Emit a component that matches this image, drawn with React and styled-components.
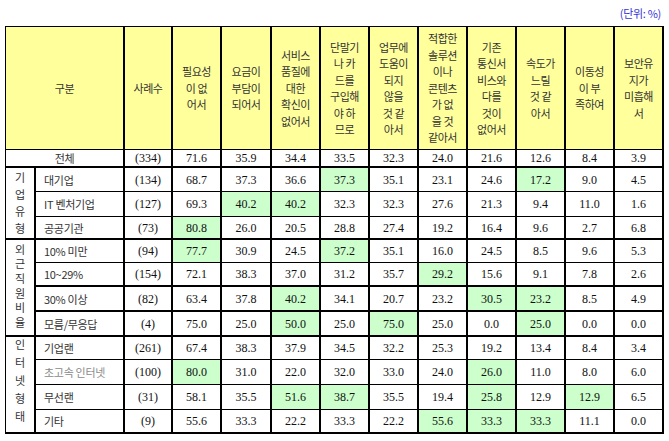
import React from "react";
import styled, { createGlobalStyle } from "styled-components";

const GlobalStyle = createGlobalStyle`
  html, body { margin: 0; padding: 0; background: #ffffff; }
  body { font-family: "Noto Sans CJK KR", "Noto Sans", sans-serif; }
`;

const Page = styled.div`
  width: 669px;
  height: 441px;
  padding: 5px 0 0 5px;
  box-sizing: border-box;
  background: #fff;
`;

const Unit = styled.div`
  height: 16px;
  line-height: 16px;
  margin-bottom: 5px;
  padding-right: 8px;
  text-align: right;
  font-size: 11px;
  color: #3535d8;
  letter-spacing: -0.3px;
`;

const Table = styled.table`
  width: 659px;
  table-layout: fixed;
  border-collapse: separate;
  border-spacing: 0;
  border-top: 1px solid #000;
  border-left: 1px solid #000;
`;

const HeadRow = styled.tr`
  height: 123px;
`;

const HeadCell = styled.th`
  background: #ffff9c;
  border-right: 2px solid #000;
  border-bottom: 1px solid #000;
  padding: 0;
  font-weight: normal;
  font-size: 11px;
  line-height: 16.5px;
  color: #333;
  text-align: center;
  vertical-align: middle;
  letter-spacing: -0.4px;
  white-space: nowrap;
`;

const Row = styled.tr`
  height: ${(p) => p.$h}px;
`;

const Cell = styled.td`
  border-right: 2px solid #000;
  border-bottom: ${(p) => (p.$thick ? 2 : 1)}px solid #000;
  padding: 0;
  white-space: nowrap;
  vertical-align: middle;
  line-height: 14px;
`;

const TotalCell = styled(Cell)`
  text-align: center;
  font-size: 11px;
  color: #333;
  letter-spacing: -0.3px;
`;

const CatCell = styled(Cell)`
  border-bottom-width: 2px;
  text-align: center;
`;

const CatText = styled.div`
  display: flex;
  flex-direction: column;
  align-items: center;
  font-size: 11px;
  line-height: ${(p) => p.$lh}px;
  color: #333;
  transform: translateY(${(p) => p.$dy || 0}px);
`;

const LabelCell = styled(Cell)`
  padding-left: 8px;
  text-align: left;
  font-size: 11px;
  color: ${(p) => (p.$muted ? "#8a8a8a" : "#333")};
  letter-spacing: -0.3px;
`;

const NumCell = styled(Cell)`
  text-align: center;
  font-family: "Liberation Serif", "DejaVu Serif", serif;
  font-size: 12px;
  color: #111;
  background: ${(p) => (p.$hl ? "#ccffcc" : "#fff")};
`;

const headers = [
  ["필요성", "이 없", "어서"],
  ["요금이", "부담이", "되어서"],
  ["서비스", "품질에", "대한", "확신이", "없어서"],
  ["단말기", "나 카", "드를", "구입해", "야 하", "므로"],
  ["업무에", "도움이", "되지", "않을", "것 같", "아서"],
  ["적합한", "솔루션", "이나", "콘텐츠", "가 없", "을 것", "같아서"],
  ["기존", "통신서", "비스와", "다를", "것이", "없어서"],
  ["속도가", "느릴", "것 같", "아서"],
  ["이동성", "이 부", "족하여"],
  ["보안유", "지가", "미흡해", "서"],
];

const total = {
  n: "(334)",
  v: ["71.6", "35.9", "34.4", "33.5", "32.3", "24.0", "21.6", "12.6", "8.4", "3.9"],
};

// hl: indices of highlighted data cells
const groups = [
  {
    cat: ["기", "업", "유", "형"],
    lh: 17,
    dy: 0,
    rows: [
      { label: "대기업", n: "(134)", h: 24, v: ["68.7", "37.3", "36.6", "37.3", "35.1", "23.1", "24.6", "17.2", "9.0", "4.5"], hl: [3, 7] },
      { label: "IT 벤처기업", n: "(127)", h: 25, v: ["69.3", "40.2", "40.2", "32.3", "32.3", "27.6", "21.3", "9.4", "11.0", "1.6"], hl: [1, 2] },
      { label: "공공기관", n: "(73)", h: 23, thick: true, v: ["80.8", "26.0", "20.5", "28.8", "27.4", "19.2", "16.4", "9.6", "2.7", "6.8"], hl: [0] },
    ],
  },
  {
    cat: ["외", "근", "직", "원", "비", "율"],
    lh: 14.6,
    dy: -2,
    rows: [
      { label: "10% 미만", n: "(94)", h: 23, v: ["77.7", "30.9", "24.5", "37.2", "35.1", "16.0", "24.5", "8.5", "9.6", "5.3"], hl: [0, 3] },
      { label: "10~29%", n: "(154)", h: 24, thick: true, v: ["72.1", "38.3", "37.0", "31.2", "35.7", "29.2", "15.6", "9.1", "7.8", "2.6"], hl: [5] },
      { label: "30% 이상", n: "(82)", h: 25, thick: true, v: ["63.4", "37.8", "40.2", "34.1", "20.7", "23.2", "30.5", "23.2", "8.5", "4.9"], hl: [2, 6, 7] },
      { label: "모름/무응답", n: "(4)", h: 25, thick: true, v: ["75.0", "25.0", "50.0", "25.0", "75.0", "25.0", "0.0", "25.0", "0.0", "0.0"], hl: [2, 4, 7] },
    ],
  },
  {
    cat: ["인", "터", "넷", "형", "태"],
    lh: 18,
    dy: -5,
    rows: [
      { label: "기업랜", n: "(261)", h: 23, v: ["67.4", "38.3", "37.9", "34.5", "32.2", "25.3", "19.2", "13.4", "8.4", "3.4"], hl: [] },
      { label: "초고속 인터넷", n: "(100)", h: 25, muted: true, v: ["80.0", "31.0", "22.0", "32.0", "33.0", "24.0", "26.0", "11.0", "8.0", "6.0"], hl: [0, 6] },
      { label: "무선랜", n: "(31)", h: 25, v: ["58.1", "35.5", "51.6", "38.7", "35.5", "19.4", "25.8", "12.9", "12.9", "6.5"], hl: [2, 3, 6, 8] },
      { label: "기타", n: "(9)", h: 24, thick: true, v: ["55.6", "33.3", "22.2", "33.3", "22.2", "55.6", "33.3", "33.3", "11.1", "0.0"], hl: [5, 6, 7] },
    ],
  },
];

const colWidths = [30, 89, 48, 49, 50, 49, 49, 49, 49, 49, 49, 49, 49];

export default function App() {
  return (
    <>
      <GlobalStyle />
      <Page>
        <Unit>(단위: %)</Unit>
        <Table>
          <colgroup>
            {colWidths.map((w, i) => (
              <col key={i} style={{ width: w }} />
            ))}
          </colgroup>
          <thead>
            <HeadRow>
              <HeadCell colSpan={2}>구분</HeadCell>
              <HeadCell>사례수</HeadCell>
              {headers.map((lines, i) => (
                <HeadCell key={i}>
                  {lines.map((l, j) => (
                    <React.Fragment key={j}>
                      {j > 0 && <br />}
                      {l}
                    </React.Fragment>
                  ))}
                </HeadCell>
              ))}
            </HeadRow>
          </thead>
          <tbody>
            <Row $h={18}>
              <TotalCell colSpan={2} $thick>
                전체
              </TotalCell>
              <NumCell $thick>{total.n}</NumCell>
              {total.v.map((v, i) => (
                <NumCell key={i} $thick>
                  {v}
                </NumCell>
              ))}
            </Row>
            {groups.map((g, gi) =>
              g.rows.map((r, ri) => (
                <Row key={`${gi}-${ri}`} $h={r.h}>
                  {ri === 0 && (
                    <CatCell rowSpan={g.rows.length}>
                      <CatText $lh={g.lh} $dy={g.dy}>
                        {g.cat.map((c, ci) => (
                          <span key={ci}>{c}</span>
                        ))}
                      </CatText>
                    </CatCell>
                  )}
                  <LabelCell $thick={r.thick} $muted={r.muted}>
                    {r.label}
                  </LabelCell>
                  <NumCell $thick={r.thick}>{r.n}</NumCell>
                  {r.v.map((v, vi) => (
                    <NumCell key={vi} $thick={r.thick} $hl={r.hl.includes(vi)}>
                      {v}
                    </NumCell>
                  ))}
                </Row>
              ))
            )}
          </tbody>
        </Table>
      </Page>
    </>
  );
}
